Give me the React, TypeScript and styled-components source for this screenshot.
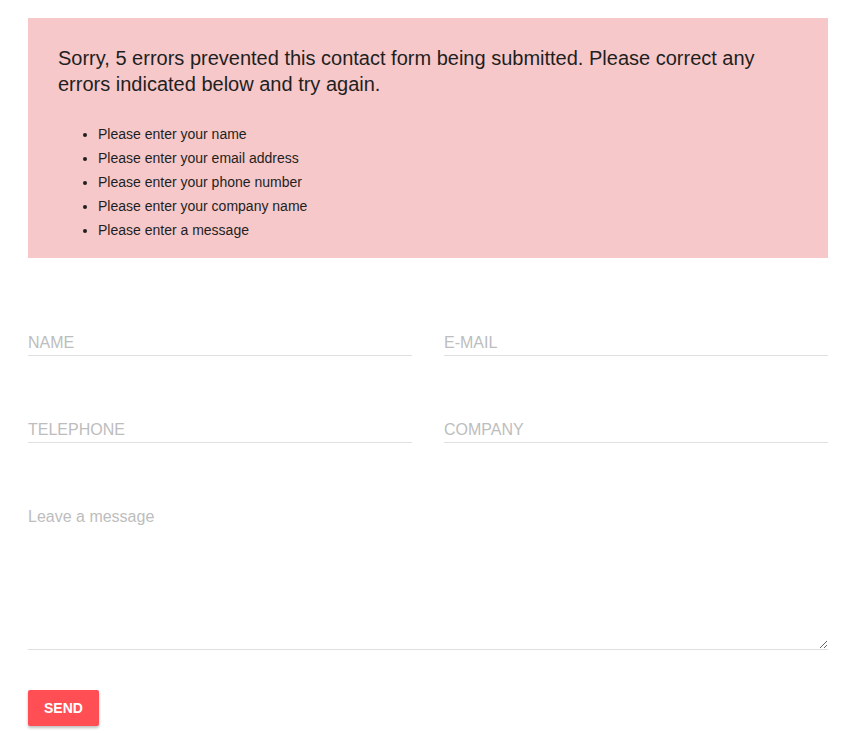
import React from 'react'
import styled, { createGlobalStyle } from 'styled-components'

const GlobalStyle = createGlobalStyle`
  body {
    margin: 8px;
    background: #fff;
    font-family: 'Liberation Sans', Arial, Helvetica, sans-serif;
    color: #222;
  }
`

const Page = styled.div`
  width: 800px;
  padding: 10px 20px 20px;
`

const ErrorBox = styled.div`
  background: #f6c8c9;
  padding: 27px 30px 16px;
`

const ErrorTitle = styled.p`
  margin: 0;
  font-size: 20px;
  line-height: 26px;
  color: #1f1f1f;
`

const ErrorList = styled.ul`
  margin: 25px 0 0;
  padding-left: 40px;
  font-size: 14px;
  line-height: 24px;
  color: #1f1f1f;
`

const Form = styled.form`
  margin-top: 65px;
`

const Fields = styled.div`
  display: grid;
  grid-template-columns: 1fr 1fr;
  column-gap: 32px;
  row-gap: 54px;
`

const Input = styled.input`
  display: block;
  width: 100%;
  box-sizing: border-box;
  border: none;
  border-bottom: 1px solid #e0e0e0;
  padding: 10px 0 2px;
  font-family: inherit;
  font-size: 16px;
  line-height: 20px;
  color: #333;
  background: transparent;
  outline: none;
  &::placeholder {
    color: #bdbdbd;
  }
`

const Message = styled.textarea`
  grid-column: 1 / -1;
  display: block;
  width: 100%;
  height: 151px;
  box-sizing: border-box;
  margin-top: 2px;
  border: none;
  border-bottom: 1px solid #e0e0e0;
  padding: 8px 0 4px;
  font-family: inherit;
  font-size: 16px;
  line-height: 20px;
  color: #333;
  background: transparent;
  outline: none;
  resize: vertical;
  &::placeholder {
    color: #bdbdbd;
  }
`

const SendButton = styled.button`
  margin-top: 40px;
  height: 36px;
  padding: 0 16px;
  border: none;
  border-radius: 2px;
  background: #ff4f55;
  color: #fff;
  font-family: inherit;
  font-size: 14px;
  font-weight: bold;
  box-shadow: 0 2px 3px rgba(0, 0, 0, 0.25);
  cursor: pointer;
`

const errors = [
  'Please enter your name',
  'Please enter your email address',
  'Please enter your phone number',
  'Please enter your company name',
  'Please enter a message',
]

export default function App() {
  return (
    <Page>
      <GlobalStyle />
      <ErrorBox>
        <ErrorTitle>
          Sorry, 5 errors prevented this contact form being submitted. Please correct any
          errors indicated below and try again.
        </ErrorTitle>
        <ErrorList>
          {errors.map((e) => (
            <li key={e}>{e}</li>
          ))}
        </ErrorList>
      </ErrorBox>
      <Form onSubmit={(e) => e.preventDefault()}>
        <Fields>
          <Input type='text' placeholder='NAME' />
          <Input type='email' placeholder='E-MAIL' />
          <Input type='tel' placeholder='TELEPHONE' />
          <Input type='text' placeholder='COMPANY' />
          <Message placeholder='Leave a message' />
        </Fields>
        <SendButton type='submit'>SEND</SendButton>
      </Form>
    </Page>
  )
}
